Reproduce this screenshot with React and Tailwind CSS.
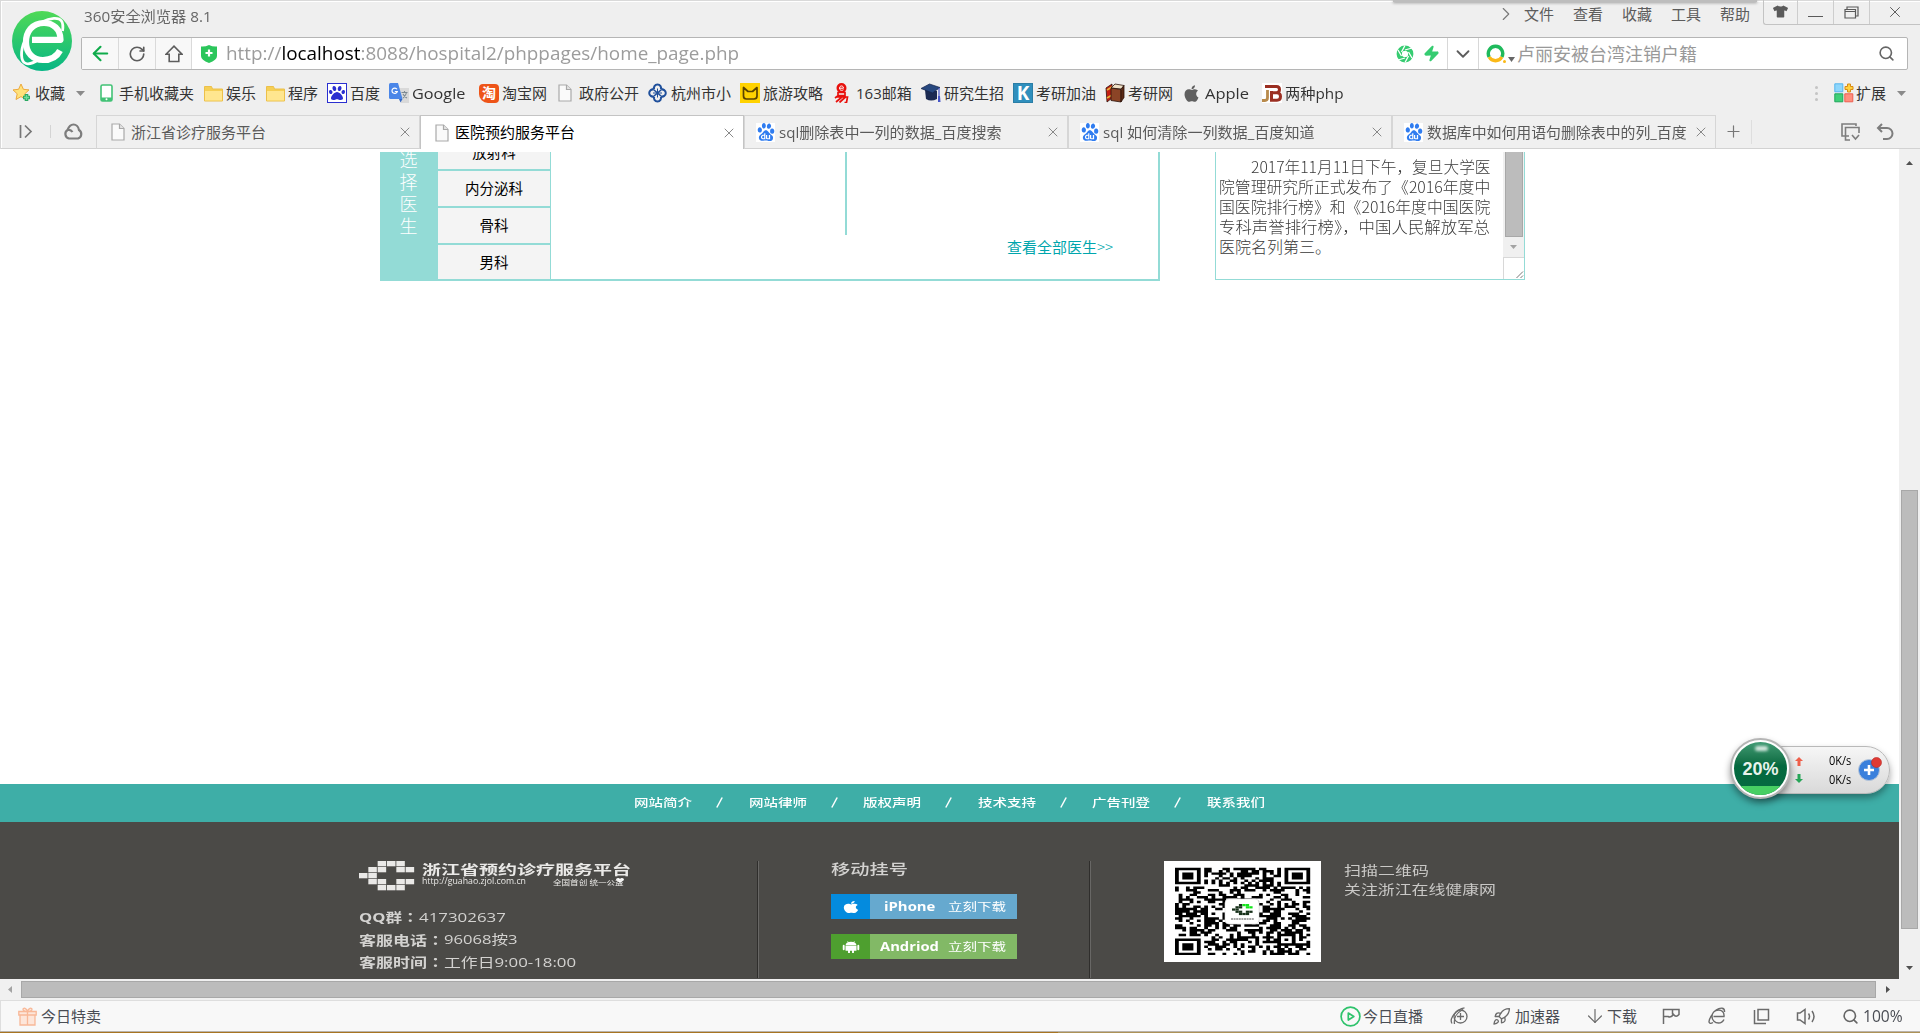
import React, { useLayoutEffect, useRef, useState } from "react";
import { FaApple, FaTshirt, FaPaw } from "react-icons/fa";
import { SiBaidu } from "react-icons/si";
import { Search, Zap, ArrowLeft, RotateCw, ChevronDown, ChevronRight, X, Plus, Rocket, ArrowDown } from "lucide-react";

/* Text run scaled horizontally so that it fills the width of its box. */
function Fit({ className = "", children }) {
  const box = useRef(null);
  const run = useRef(null);
  const [k, setK] = useState(1);
  useLayoutEffect(() => {
    const w = run.current.offsetWidth;
    if (w) setK(box.current.clientWidth / w);
  }, []);
  return (
    <div ref={box} className={"shrink-0 whitespace-nowrap leading-none " + className}>
      <span ref={run} className="inline-block origin-left" style={{ transform: `scaleX(${k})` }}>
        {children}
      </span>
    </div>
  );
}

const PageIcon = ({ className = "" }) => (
  <svg width="14" height="18" viewBox="0 0 14 18" className={"shrink-0 " + className} fill="#fafafa" stroke="#a9a9a9" strokeWidth="1.2">
    <path d="M1 1h7.5L13 5.5V17H1z" />
    <path d="M8.5 1v4.5H13" fill="#e4e4e4" />
  </svg>
);

const FolderIcon = () => (
  <svg width="19" height="17" viewBox="0 0 19 17">
    <path d="M.5 1.5h7l1 2.5H18.500v12H.5z" fill="#f5cf55" stroke="#ecc04a" />
    <path d="M1 6h17v9.500H1z" fill="#ffe68f" />
  </svg>
);

const StarIcon = () => (
  <svg width="20" height="20" viewBox="0 0 20 20">
    <path d="M9 1l2.400 5.300 5.600.6-4.200 3.900 1.200 5.700L9 13.600l-5 2.900 1.200-5.700L1 6.900l5.600-.6z" fill="#ffe27a" stroke="#eda93c" />
    <path d="M14.500 11v7M11 14.500h7" stroke="#2aa862" strokeWidth="3.600" />
    <path d="M14.500 12v5M12 14.500h5" stroke="#6fdc9c" strokeWidth="1.400" />
  </svg>
);

const PhoneIcon = () => (
  <svg width="13" height="18" viewBox="0 0 13 18">
    <rect x="1" y="1" width="11" height="16" rx="1.500" fill="#fff" stroke="#42c276" strokeWidth="1.600" />
    <path d="M1 13.500h11v2.500a1 1 0 0 1-1 1H2a1 1 0 0 1-1-1z" fill="#42c276" />
    <circle cx="6.500" cy="15.300" r="1" fill="#fff" />
  </svg>
);

const BaiduBox = () => (
  <div className="flex h-5 w-5 items-center justify-center border-[1.500px] border-[#2a2fd0] bg-white">
    <FaPaw size={16} color="#2a2fd0" />
  </div>
);

const GoogleIcon = () => (
  <svg width="20" height="20" viewBox="0 0 20 20">
    <path d="M8 5h12v15h-8z" fill="#d9d9d9" />
    <path d="M0 1.500Q0 0 1.500 0H9l4.500 16H1.500Q0 16 0 14.500z" fill="#4a86e8" />
    <path d="M10 16h3.500l-2 3.500z" fill="#3568c4" />
    <path d="M8 6.300A2.700 2.700 0 1 0 8.300 8.500H5.800" fill="none" stroke="#fff" strokeWidth="1.200" />
    <path d="M12.500 9.500h6M15.500 8v1.500M17.500 9.500c-.5 3-2.500 4.500-3.500 5.500M14 11c1 2 2.500 3.500 4 4" stroke="#7d8a93" strokeWidth="1.100" fill="none" />
  </svg>
);

const TaoIcon = () => (
  <div className="flex h-[19px] w-5 items-center justify-center rounded-[4px] rounded-bl-[9px] bg-[#ee5418] text-[14px] leading-none font-bold text-white">淘</div>
);

const HangzhouIcon = () => (
  <svg width="19" height="20" viewBox="0 0 19 20" fill="none" stroke="#1f4f9b" strokeWidth="2">
    <path d="M9.500 10V5.500M9.500 10v4.500M9.500 10H5M9.500 10h4.500" strokeWidth="1" />
    <path d="M6.200 6.500a3.600 3.600 0 1 1 6.600 0M6.200 13.500a3.600 3.600 0 1 0 6.600 0M6 6.600a3.600 3.600 0 1 0 0 6.800M13 6.600a3.600 3.600 0 1 1 0 6.800" />
    <path d="M6 7q3.500 3 7 6M13 7q-3.500 3-7 6" strokeWidth="1.600" />
  </svg>
);

const CatIcon = () => (
  <svg width="20" height="20" viewBox="0 0 20 20">
    <path d="M0 0h20v20H0z" fill="#ffd200" />
    <path d="M3.500 4.500V13q0 3 3 3h7.500q3 0 3-3V4.500l-4.500 4h-4.500z" fill="none" stroke="#5a4300" strokeWidth="1.700" strokeLinejoin="round" />
  </svg>
);

const NetEaseIcon = () => (
  <svg width="15" height="20" viewBox="0 0 15 20" fill="none" stroke="#e8100c">
    <circle cx="7.500" cy="5" r="4" strokeWidth="2" fill="#e8100c" />
    <path d="M5.500 5.200h4c0-3-4-3-4 0 0 2.500 3 2.500 4 1.500" stroke="#fff" strokeWidth="1" />
    <path d="M4 9.500h7v3H4zM1 15l4-3M3 14h10.500l-1 5.500h-2M8 14l-6 5M11.500 14l-6 5.500" strokeWidth="1.700" />
  </svg>
);

const CapIcon = () => (
  <svg width="20" height="20" viewBox="0 0 20 20">
    <path d="M4 7l12 1v8q-6 3-11 0z" fill="#1b2a52" />
    <path d="M0 5.500L8.500 1 19 4.500 11.500 10z" fill="#27487f" stroke="#14234a" strokeWidth=".7" />
    <path d="M18 5v9" stroke="#4656c8" strokeWidth="1.200" />
    <path d="M17 13h2l.5 6h-2.500z" fill="#4656c8" />
  </svg>
);

const KIcon = () => (
  <div className="flex h-5 w-5 items-center justify-center border border-[#2b7ea6] bg-[#2f8fbd] text-[19px] leading-none font-bold text-white">K</div>
);

const BookIcon = () => (
  <svg width="20" height="20" viewBox="0 0 20 20" stroke="#2c130b" strokeWidth=".8">
    <path d="M1 5l6-4v14l-5 4z" fill="#c31d12" />
    <path d="M2 7l5-3M2 15l5-3" stroke="#e9b43c" strokeWidth="1.500" />
    <path d="M6 5l4-4 9 1.500-3 3.500z" fill="#efe2c8" />
    <path d="M6 5l10 1.500V19L6 17.500z" fill="#8b4426" />
    <path d="M16 6.500l3-4v12l-3 4.500z" fill="#5a2914" />
  </svg>
);

const JBIcon = () => (
  <svg width="20" height="20" viewBox="0 0 20 20" fill="none">
    <path d="M0 0h20v20H0z" fill="#fff" />
    <path d="M5.500 7v7.500q0 3-2.500 3H0" stroke="#b88a4c" strokeWidth="2.800" />
    <path d="M3 3.500h11.500q3 0 3 3t-3 3.200H10M9.500 8v9.300h5.500q3.500 0 3.500-3.700T15 9.800" stroke="#9b2f22" strokeWidth="3" />
  </svg>
);

const ExtIcon = () => (
  <svg width="20" height="20" viewBox="0 0 20 20">
    <path d="M.8.8h8v8h-8z" fill="#8ed6fb" stroke="#55b5ee" />
    <path d="M.8 10.800h8v8h-8z" fill="#3fcf78" stroke="#1ea65a" />
    <path d="M10.800 10.800h8v8h-8z" fill="#ff8f7d" stroke="#ee5f50" />
    <path d="M13.500 1h3v2.500H19v3h-2.500V9h-3V6.500H11v-3h2.500z" fill="#ffd23f" stroke="#d98a13" />
  </svg>
);

const GiftIcon = () => (
  <svg width="19" height="19" viewBox="0 0 19 19" fill="#fde6da" stroke="#f8b898" strokeWidth="1.300">
    <path d="M2 8h15v10H2zM.8 4.500h17.400V8H.8zM9.500 4.500V18" />
    <path d="M9.500 4.500C7 4.500 4.500 3.500 5 2s3.500-1 4.500 2.500C10.500 1 13.500.5 14 2s-2 2.500-4.500 2.500z" />
  </svg>
);

const AndroidIcon = () => (
  <svg width="18" height="12" viewBox="0 0 18 12" fill="#fff">
    <path d="M3.500 4.200Q4 .8 9 .8t5.500 3.400zM3.500 4.800h11v4.400q0 .6-.8.6H4.300q-.8 0-.8-.6z" />
    <path d="M1.700 4.800v3.400M16.300 4.800v3.400M7 9.500v2M11 9.500v2" stroke="#fff" strokeWidth="1.900" strokeLinecap="round" />
    <path d="M5.500.2l1 1.300M12.500.2l-1 1.300" stroke="#fff" strokeWidth=".7" />
  </svg>
);

const Caret = ({ className = "" }) => (
  <svg width="9" height="5" viewBox="0 0 9 5" className={"shrink-0 " + className}>
    <path d="M0 0h9L4.500 5z" fill="#8a8a8a" />
  </svg>
);

const Logo = () => (
  <svg width="60" height="60" viewBox="0 0 60 60" className="shrink-0">
    <defs>
      <linearGradient id="lg" x1="0" y1="0" x2="0" y2="1">
        <stop offset="0" stopColor="#4fd956" />
        <stop offset="1" stopColor="#06b685" />
      </linearGradient>
    </defs>
    <circle cx="30" cy="30" r="30" fill="url(#lg)" />
    <g fill="none" stroke="#fff">
      <path d="M20 28.800H48.500C48.500 18 41 12 32 12C20 12 14 21 14 31C14 42 21 49 31 49C38.500 49 45 45.500 48 39.500" strokeWidth="6.200" strokeLinejoin="round" />
      <path d="M13 29C8 40 8.500 51 14 52.500C17 53.500 23 51 27 48.500" strokeWidth="2.800" />
      <path d="M30 11C38 6.500 47 6 49.500 10C51.500 13 51 17 50.500 20" strokeWidth="2.800" />
    </g>
  </svg>
);

/* icon, label, item pitch, icon slot, label width, has caret */
const bookmarks = [
  [StarIcon, "收藏", "w-[88px]", "w-[20px] mr-[3px]", "w-[30px]", true],
  [PhoneIcon, "手机收藏夹", "w-[104px]", "w-[13px] mr-[6px]", "w-[75px]"],
  [FolderIcon, "娱乐", "w-[62px]", "w-[19px] mr-[3px]", "w-[30px]"],
  [FolderIcon, "程序", "w-[61px]", "w-[19px] mr-[3px]", "w-[30px]"],
  [BaiduBox, "百度", "w-[62px]", "w-[20px] mr-[3px]", "w-[30px]"],
  [GoogleIcon, "Google", "w-[90px]", "w-[20px] mr-[3px]", "w-[53px]"],
  [TaoIcon, "淘宝网", "w-[79px]", "w-[20px] mr-[3px]", "w-[45px]"],
  [PageIcon, "政府公开", "w-[90px]", "w-[14px] mr-[7px]", "w-[60px]"],
  [HangzhouIcon, "杭州市小", "w-[92px]", "w-[19px] mr-[4px]", "w-[60px]"],
  [CatIcon, "旅游攻略", "w-[94px]", "w-[20px] mr-[3px]", "w-[60px]"],
  [NetEaseIcon, "163邮箱", "w-[87px]", "w-[15px] mr-[7px]", "w-[56px]"],
  [CapIcon, "研究生招", "w-[92px]", "w-[20px] mr-[3px]", "w-[60px]"],
  [KIcon, "考研加油", "w-[92px]", "w-[20px] mr-[3px]", "w-[60px]"],
  [BookIcon, "考研网", "w-[79px]", "w-[20px] mr-[3px]", "w-[45px]"],
  [() => <FaApple size={19} color="#5f5f5f" />, "Apple", "w-[78px]", "w-[15px] mr-[6px]", "w-[44px]"],
  [JBIcon, "两种php", "w-[90px]", "w-[20px] mr-[3px]", "w-[59px]"],
];

const BaiduIcon = () => (
  <div className="flex h-[19px] w-[19px] shrink-0 items-center justify-center bg-white">
    <SiBaidu size={18} color="#2f7cf0" />
  </div>
);

function Tab({ icon, label, active, width }) {
  return (
    <div
      className={
        "flex h-[34px] w-[324px] shrink-0 items-center border-x border-t pr-[6px] " +
        (active
          ? "border-[#c4c4c4] bg-white pl-[14px] text-black"
          : "border-b border-[#d6d6d6] border-b-[#d2d2d2] bg-[#f0f0f0] text-[#5a5a5a] " + (icon ? "pl-[11px]" : "pl-[14px]"))
      }
    >
      {icon ? <BaiduIcon /> : <PageIcon className="mr-[2px]" />}
      <Fit className={"ml-[4px] text-[15px] " + width}>{label}</Fit>
      <X size={16} strokeWidth={1.400} className="ml-auto shrink-0 text-[#808080]" />
    </div>
  );
}

const departments = ["内分泌科", "骨科", "男科"];

const navItems = ["网站简介", "网站律师", "版权声明", "技术支持", "广告刊登", "联系我们"];

const N = 37;
function finder(x, y, ox, oy) {
  const a = x - ox;
  const b = y - oy;
  if (a < -1 || a > 7 || b < -1 || b > 7) return null;
  if (a < 0 || a > 6 || b < 0 || b > 6) return false;
  const d = Math.max(Math.abs(a - 3), Math.abs(b - 3));
  return d === 3 || d <= 1;
}
function qrPath() {
  let seed = 20171;
  let d = "";
  for (let y = 0; y < N; y++) {
    for (let x = 0; x < N; x++) {
      seed = (seed * 1103515245 + 12345) % 2147483648;
      let on = seed / 2147483648 < 0.52;
      const f = finder(x, y, 0, 0) ?? finder(x, y, N - 7, 0) ?? finder(x, y, 0, N - 7);
      if (f !== null && f !== undefined) on = f;
      else if (x === 6 || y === 6) on = (x + y) % 2 === 0;
      else {
        const m = Math.max(Math.abs(x - 30), Math.abs(y - 30));
        if (m <= 2) on = m !== 1;
      }
      if (on) d += `M${x} ${y}h1.040v1.040h-1.040z`;
    }
  }
  return d;
}
const qr = qrPath();

const logoCells = [[2, 0], [3, 0], [4, 0], [1, 1], [2, 1], [4, 1], [5, 1], [0, 2], [1, 2], [1, 3], [2, 3], [4, 3], [5, 3], [2, 4], [3, 4], [4, 4]];

const TitleBar = () => (
  <div className="flex h-[37px] items-start">
    <Fit className="mt-[9px] ml-[3px] w-[128px] text-[15px] text-[#666]">360安全浏览器 8.1</Fit>
    <div className="ml-auto flex h-[28px] items-center">
      <ChevronRight size={22} strokeWidth={1.200} className="mr-[7px] text-[#777]" />
      <div className="flex gap-[19px] pr-[13px] text-[15px] text-[#5c5c5c]">
        {["文件", "查看", "收藏", "工具", "帮助"].map((t) => (
          <Fit key={t} className="w-[30px]">{t}</Fit>
        ))}
      </div>
    </div>
    <div className="flex h-[25px] w-[157px] rounded-bl-[3px] border-b border-l border-[#c3c3c3] text-[#5a5a5a]">
      <div className="flex w-[34px] items-center justify-center border-r border-[#cdcdcd] pb-px"><FaTshirt size={15} /></div>
      <div className="flex w-[36px] items-center justify-center border-r border-[#cdcdcd] pt-[8px]"><div className="h-px w-[15px] bg-[#5a5a5a]" /></div>
      <div className="flex w-[36px] items-center justify-center border-r border-[#cdcdcd]">
        <svg width="15" height="13" viewBox="0 0 15 13" fill="none" stroke="#5a5a5a" strokeWidth="1.200">
          <path d="M3 3V1h11v9h-2" />
          <path d="M1 3.500h10.500v8.500H1zM1 5.500h10.500" />
        </svg>
      </div>
      <div className="flex flex-1 items-center justify-center pr-[1px]"><X size={18} strokeWidth={1.300} /></div>
    </div>
  </div>
);

const AddressBar = () => (
  <div className="flex h-[33px] w-[1827px] items-stretch rounded-[2px] border border-[#b5b5b5] bg-white">
    <div className="flex w-[37px] items-center justify-center border-r border-[#dadada] bg-[#f8f8f8] text-[#0fab4b]"><ArrowLeft size={23} strokeWidth={2.200} /></div>
    <div className="flex w-[37px] items-center justify-center border-r border-[#dadada] bg-[#f8f8f8] text-[#5d5d5d]"><RotateCw size={18} strokeWidth={2.200} /></div>
    <div className="flex w-[36px] items-center justify-center border-r border-[#dadada] bg-[#f8f8f8] text-[#5d5d5d]">
      <svg width="18" height="18" viewBox="0 0 18 18" fill="none" stroke="#5d5d5d" strokeWidth="1.600"><path d="M1 9.200L9 1.200l8 8h-3.200V16.500H4.200V9.200z" /></svg>
    </div>
    <div className="flex flex-1 items-center pl-[9px]">
      <svg width="16" height="18" viewBox="0 0 16 18">
        <path d="M0 1.500Q4 2 8 0q4 2 8 1.500V11q0 4-8 7-8-3-8-7z" fill="#2cc65c" />
        <path d="M8 4.500v7M4.500 8h7" stroke="#fff" strokeWidth="2.200" />
      </svg>
      <Fit className="ml-[9px] w-[513px] text-[19px] text-[#9c9c9c]">
        http://<span className="text-black">localhost</span>:8088/hospital2/phppages/home_page.php
      </Fit>
      <svg width="18" height="18" viewBox="0 0 18 18" className="ml-auto" fill="none" stroke="#36cc71">
        <circle cx="9" cy="9" r="5.700" strokeWidth="5.400" />
        <g stroke="#fff" strokeWidth="1.300"><path d="M9 5L16 3M12.500 7l3.500 6M12.500 11L9 17.500M9 13L2 15M5.500 11L2 5M5.500 7L9 .5" /></g>
        <circle cx="9" cy="9" r="3" fill="#fff" stroke="none" />
      </svg>
      <Zap size={17} className="mr-[7px] ml-[9px] text-[#36cc71]" fill="#36cc71" />
    </div>
    <div className="flex w-[32px] items-center justify-center border-x border-[#d8d8d8] text-[#5d5d5d]"><ChevronDown size={22} strokeWidth={2} /></div>
    <div className="flex w-[428px] items-center pl-[7px]">
      <svg width="21" height="20" viewBox="0 0 21 20" fill="none" strokeWidth="3.400">
        <path d="M3.200 13A7.200 7.200 0 1 1 15.800 13" stroke="#1fba5c" />
        <path d="M3.200 13a7.200 7.200 0 0 0 12.600 0" stroke="#fbb917" />
        <circle cx="18.500" cy="17.500" r="1.500" fill="#fbb917" stroke="none" />
      </svg>
      <svg width="7" height="5" viewBox="0 0 7 5" className="mt-[12px] ml-[1px]"><path d="M0 0h7L3.500 5z" fill="#666" /></svg>
      <Fit className="ml-[2px] w-[180px] text-[18px] text-[#999]">卢丽安被台湾注销户籍</Fit>
      <Search size={17} strokeWidth={2.300} className="mr-[12px] ml-auto text-[#666]" />
    </div>
  </div>
);

const Bookmarks = () => (
  <div className="flex h-[45px] items-center pt-px pl-[11px] text-[15px] text-[#333]">
    {bookmarks.map(([Icon, label, w, iw, tw, caret]) => (
      <div key={label} className={"flex shrink-0 items-center " + w}>
        <div className={"flex shrink-0 items-center justify-center " + iw}><Icon /></div>
        <Fit className={tw}>{label}</Fit>
        {caret && <Caret className="ml-[11px]" />}
      </div>
    ))}
    <div className="mr-[16px] ml-auto flex flex-col gap-[3px]">
      <div className="h-[3px] w-[3px] rounded-full bg-[#c4c4c4]" />
      <div className="h-[3px] w-[3px] rounded-full bg-[#c4c4c4]" />
      <div className="h-[3px] w-[3px] rounded-full bg-[#c4c4c4]" />
    </div>
    <ExtIcon />
    <Fit className="ml-[2px] w-[30px]">扩展</Fit>
    <Caret className="mr-[14px] ml-[11px]" />
  </div>
);

const TabStrip = () => (
  <div className="flex h-[34px] items-center border-b border-[#d2d2d2]">
    <svg width="14" height="15" viewBox="0 0 14 15" className="ml-[18px]" fill="none" stroke="#777" strokeWidth="1.700"><path d="M1.500 1v13M6 1.500l6 6-6 6" /></svg>
    <div className="ml-[17px] h-[13px] w-px bg-[#d4d4d4]" />
    <svg width="21" height="17" viewBox="0 0 21 17" className="ml-[12px]" fill="none" stroke="#7d7d7d" strokeWidth="2.200"><path d="M6 15.500a4.700 4.700 0 0 1-1.500-8.500C6 3 8 1.500 10.500 1.500S15.500 3.500 16 7a4.700 4.700 0 0 1-1 8.500zM5 7c2-.5 3.500.5 4.500 2" /></svg>
    <div className="ml-[12px] flex self-start">
      <Tab label="浙江省诊疗服务平台" width="w-[135px]" />
      <Tab label="医院预约服务平台" active width="w-[120px]" />
      <Tab label="sql删除表中一列的数据_百度搜索" icon width="w-[223px]" />
      <Tab label="sql 如何清除一列数据_百度知道" icon width="w-[212px]" />
      <Tab label="数据库中如何用语句删除表中的列_百度" icon width="w-[260px]" />
    </div>
    <Plus size={19} strokeWidth={1.500} className="ml-[8px] text-[#777]" />
    <div className="ml-[8px] h-[24px] w-px bg-[#dedede]" />
    <svg width="19" height="18" viewBox="0 0 19 18" className="ml-auto" fill="none" stroke="#7d7d7d" strokeWidth="1.600"><path d="M8 13H1V1h14v2M9 17H4.500V4.500H18V10M11 12l3.500 4 3.500-4" /></svg>
    <svg width="18" height="18" viewBox="0 0 18 18" className="mr-[26px] ml-[16px]" fill="none" stroke="#7d7d7d" strokeWidth="2"><path d="M2 5h9a5.500 5.500 0 0 1 0 11H7M6 1L2 5l4 4" /></svg>
  </div>
);

const DoctorPanel = () => (
  <div className="flex h-[129px] w-[780px] shrink-0 border-r-2 border-b-2 border-[#93dbd6]">
    <div className="flex w-[58px] shrink-0 flex-col items-center overflow-hidden bg-[#93dbd6] pr-[1px] text-[18px] leading-[22px] font-light text-white">
      <div className="-mt-[4px]">选</div><div>择</div><div>医</div><div>生</div>
    </div>
    <div className="flex w-[113px] shrink-0 flex-col border-r border-[#93dbd6] bg-[#f4f4f4] text-[14.500px] text-black">
      <div className="flex h-[17px] shrink-0 items-end justify-center overflow-hidden pb-[9px] leading-[17px]">放射科</div>
      {departments.map((d) => (
        <div key={d} className="flex h-[37px] shrink-0 justify-center border-t-2 border-[#93dbd6] leading-[33px]">{d}</div>
      ))}
    </div>
    <div className="h-[83px] w-[296px] shrink-0 border-r-2 border-[#93dbd6]" />
    <Fit className="mt-[87px] ml-[160px] w-[106px] text-[15px] text-[#00a6ad]">查看全部医生<span className="font-light">&gt;&gt;</span></Fit>
  </div>
);

const NewsBox = () => (
  <div className="ml-[55px] flex h-[128px] w-[310px] shrink-0 border-x border-b border-[#93dbd6] bg-white">
    <div className="flex flex-1 flex-col gap-[4px] pt-[6px] pl-[3px] text-[16px] font-light text-[#3a3a3a]">
      <Fit className="ml-[32px] w-[239px]">2017年11月11日下午，复旦大学医</Fit>
      <Fit className="w-[271px]">院管理研究所正式发布了《2016年度中</Fit>
      <Fit className="w-[271px]">国医院排行榜》和《2016年度中国医院</Fit>
      <Fit className="w-[271px]">专科声誉排行榜》，中国人民解放军总</Fit>
      <Fit className="w-[112px]">医院名列第三。</Fit>
    </div>
    <div className="flex w-[21px] flex-col bg-[#f0f0f0]">
      <div className="mx-auto h-[85px] w-[18px] border border-t-0 border-[#a8a8a8] bg-[#bcbcbc]" />
      <div className="flex h-[20px] items-center justify-center"><svg width="7" height="4" viewBox="0 0 7 4"><path d="M0 0h7L3.500 4z" fill="#a3a3a3" /></svg></div>
      <div className="flex flex-1 items-end justify-end border-t border-l border-[#d8d8d8] bg-white">
        <svg width="9" height="9" viewBox="0 0 9 9" stroke="#777" fill="none"><path d="M1.500 8L8 1.500M5.500 8L8 5.500" /></svg>
      </div>
    </div>
  </div>
);

const InfoRow = ({ label, value, lw, vw }) => (
  <div className="flex h-[22.500px] items-center text-[13px] text-[#d3d2d0]">
    <Fit className={"font-bold " + lw}>{label}<span className="font-['Noto_Sans_CJK_TC',sans-serif]">：</span></Fit>
    <Fit className={vw}>{value}</Fit>
  </div>
);

const FooterRule = () => <div className="mt-[39px] h-[117px] w-[2px] shrink-0 border-l border-[#2f2e2c] bg-[#686765]" />;

const Footer = () => (
  <div>
    <div className="flex h-[38px] items-center bg-[#3eaea7] pb-[2px] pl-[634px] text-[11px] font-medium text-white">
      {navItems.map((t, i) => (
        <div key={t} className="flex items-center">
          <Fit className="w-[58px]">{t}</Fit>
          {i < 5 && <div className="mr-[25.500px] ml-[24px] w-[7px]"><svg width="7" height="11" viewBox="0 0 7 11"><path d="M.8 10.500L6.200.5" stroke="#fff" strokeWidth="1.500" /></svg></div>}
        </div>
      ))}
    </div>
    <div className="flex h-[157px] bg-[#4b4a47]">
      <div className="mt-[39px] ml-[359px] w-[398px] shrink-0">
        <div className="flex h-[34px]">
          <svg width="56" height="30" viewBox="0 0 56 30" fill="#eae9e7">
            {logoCells.map(([x, y]) => <rect key={x + "-" + y} x={x * 9.330} y={y * 6} width="8.500" height="5.300" />)}
          </svg>
          <div className="pt-[2px] pl-[7px] text-[#eae9e7]">
            <Fit className="h-[13px] w-[209px] text-[13px] font-bold">浙江省预约诊疗服务平台</Fit>
            <div className="flex items-start">
              <Fit className="mt-[1px] w-[104px] text-[8.500px]">http://guahao.zjol.com.cn</Fit>
              <Fit className="mt-[4px] ml-[27px] w-[71px] text-[6.500px]">全国首创 统一公益</Fit>
              <svg width="8" height="5" viewBox="0 0 8 5" className="mt-[2px] -ml-[8px]"><path d="M4 5L0 2Q0 0 2 0q1.500 0 2 1Q4.500 0 6 0q2 0 2 2z" fill="#fff" /></svg>
            </div>
          </div>
        </div>
        <div className="mt-[11px]">
          <InfoRow label="QQ群" value="417302637" lw="w-[60px]" vw="w-[87px]" />
          <InfoRow label="客服电话" value="96068按3" lw="w-[85px]" vw="w-[74px]" />
          <InfoRow label="客服时间" value="工作日9:00-18:00" lw="w-[85px]" vw="w-[132px]" />
        </div>
      </div>
      <FooterRule />
      <div className="mt-[39px] ml-[72px] w-[259px] shrink-0">
        <Fit className="mt-[1px] h-[31px] w-[77px] text-[14px] font-medium text-[#d3d2d0]">移动挂号</Fit>
        <div className="mt-px flex h-[25px] w-[186px] items-center bg-[#66a9cf] text-white">
          <div className="flex h-full w-[39px] items-center justify-center bg-[#048bde]"><FaApple size={14} className="scale-x-140" /></div>
          <Fit className="ml-[14px] w-[52px] text-[12px] font-bold">iPhone</Fit>
          <Fit className="ml-[12px] w-[58px] text-[11px]">立刻下载</Fit>
        </div>
        <div className="mt-[15px] flex h-[25px] w-[186px] items-center bg-[#82b966] text-white">
          <div className="flex h-full w-[39px] items-center justify-center bg-[#4e9f2f]"><AndroidIcon /></div>
          <Fit className="ml-[10px] w-[59px] text-[12px] font-bold">Andriod</Fit>
          <Fit className="ml-[9px] w-[58px] text-[11px]">立刻下载</Fit>
        </div>
      </div>
      <div className="-ml-px"><FooterRule /></div>
      <div className="mt-[39px] ml-[73px] h-[101px] w-[157px] shrink-0 bg-white">
        <svg width="157" height="101" viewBox="0 0 157 101">
          <g transform="translate(11 6.700) scale(3.650 2.360)"><path d={qr} fill="#000" /></g>
          <rect x="61" y="38" width="34" height="25" rx="4" fill="#fff" stroke="#ddd" strokeWidth=".6" />
          <g transform="translate(68 43) scale(.37)">
            {logoCells.map(([x, y]) => <rect key={x + "-" + y} x={x * 9.330} y={y * 6} width="9" height="6" fill={x > 2 && y < 2 ? "#14e51c" : "#17301a"} />)}
          </g>
          <path d="M67 58h23" stroke="#888" strokeWidth="1.300" strokeDasharray="2 .6" />
        </svg>
      </div>
      <div className="mt-[42px] ml-[23px] text-[13px] text-[#c9c8c6]">
        <Fit className="h-[19px] w-[85px]">扫描二维码</Fit>
        <Fit className="w-[152px]">关注浙江在线健康网</Fit>
      </div>
    </div>
  </div>
);

const SpeedWidget = () => (
  <div className="absolute top-[738px] left-[1730px] flex h-[61px] w-[160px] items-center">
    <div className="absolute top-[8px] right-0 flex h-[48px] w-[136px] items-center rounded-r-full border border-[#b9b9b9] bg-gradient-to-b from-[#f6f6f6] to-[#d9d9d9] pl-[40px] shadow-[0_4px_7px_rgba(0,0,0,0.35)]">
      <div className="flex flex-col gap-[8px]">
        <svg width="8" height="9" viewBox="0 0 8 9"><path d="M4 0l4 4H5.500v5h-3V4H0z" fill="#ee5f4a" /></svg>
        <svg width="8" height="9" viewBox="0 0 8 9"><path d="M4 9L0 5h2.500V0h3v5H8z" fill="#27a558" /></svg>
      </div>
      <div className="ml-[26px] flex flex-col gap-[7px] text-[12px] text-black">
        <Fit className="w-[22px]">0K/s</Fit>
        <Fit className="w-[22px]">0K/s</Fit>
      </div>
      <svg width="27" height="26" viewBox="0 0 27 26" className="-mt-[3px] ml-[6px] shrink-0">
        <circle cx="12" cy="14" r="10.500" fill="#3a80dc" stroke="#b5c4d8" strokeWidth="1" />
        <path d="M12 9v10M7 14h10" stroke="#fff" strokeWidth="2.600" />
        <circle cx="19.500" cy="6.500" r="5" fill="#e03a34" stroke="#b82520" strokeWidth=".6" />
      </svg>
    </div>
    <div className="relative flex h-[61px] w-[61px] items-center justify-center rounded-full border-2 border-[#b5b5b5] bg-white p-[2px] shadow-[0_4px_7px_rgba(0,0,0,0.4)]">
      <div className="relative flex h-full w-full items-center justify-center overflow-hidden rounded-full bg-gradient-to-b from-[#3f9a73] via-[#04693f] via-45% to-[#066b41]">
        <div className="absolute inset-x-0 bottom-0 h-[9px] bg-[#47cf63]" />
        <div className="absolute top-[4px] left-[21px] h-[5px] w-[13px] rounded-full bg-white/80 blur-[1.500px]" />
        <Fit className="relative w-[36px] font-['Liberation_Sans',sans-serif] text-[18px] font-bold text-[#e8f3ec]">20%</Fit>
      </div>
    </div>
  </div>
);

const StatusBar = () => (
  <div className="flex h-[31px] items-center border-t border-l border-[#dedede] bg-[#f8f8f8] text-[15px] text-[#4a4d54]">
    <div className="ml-[17px]"><GiftIcon /></div>
    <Fit className="ml-[4px] w-[60px]">今日特卖</Fit>
    <svg width="21" height="21" viewBox="0 0 21 21" className="ml-auto" fill="none" stroke="#2fc36c" strokeWidth="1.700"><circle cx="10.500" cy="10.500" r="9.400" /><path d="M8.300 7l5.500 3.500-5.500 3.500z" strokeLinejoin="round" /></svg>
    <Fit className="ml-[2px] w-[60px]">今日直播</Fit>
    <svg width="18" height="18" viewBox="0 0 18 18" className="ml-[27px]" fill="none" stroke="#6b6b6b" strokeWidth="1.300"><circle cx="10.500" cy="9.500" r="6.500" /><path d="M10.500 6v7M7 9.500h7M2 16.500C-1 12 6 2 14.500.8M4.500 17C3.500 11 7 5.500 13 2.500" /></svg>
    <Rocket size={19} strokeWidth={1.700} className="ml-[24px] text-[#6b6b6b]" />
    <Fit className="ml-[4px] w-[45px]">加速器</Fit>
    <ArrowDown size={22} strokeWidth={1.300} className="ml-[24px] text-[#6b6b6b]" />
    <Fit className="ml-[1px] w-[30px]">下载</Fit>
    <svg width="18" height="16" viewBox="0 0 18 16" className="ml-[25px]" fill="none" stroke="#6b6b6b" strokeWidth="1.500"><path d="M1.500 16V1.500H17v5q-3 3.500-5.500 0-2.500 3.500-5.500 2H1.500M10.500 1.500v5" /></svg>
    <svg width="18" height="18" viewBox="0 0 18 18" className="ml-[28px]" fill="none" stroke="#6b6b6b" strokeWidth="1.400"><path d="M5.500 9.500H16C16.500 5 13.500 3 10.500 3 6 3 4 6.500 4 9.500c0 4 3 6.500 6.500 6.500 2.500 0 4.500-1.500 5.500-3.500M4 8C-1 15 1 18 5 15.500M8 3c4-2.500 9-3 8.500 2" /></svg>
    <svg width="17" height="17" viewBox="0 0 17 17" className="ml-[27px]" fill="none" stroke="#6b6b6b" strokeWidth="1.500"><path d="M5 1.500h10.500V12H5zM1.500 2v13.500H13" /></svg>
    <svg width="21" height="17" viewBox="0 0 21 17" className="ml-[26px]" fill="none" stroke="#6b6b6b" strokeWidth="1.500"><path d="M1.500 5v7H4l5 3.500v-14L4 5zM12.500 5.500q2 3 0 6M16 3q4 5.500 0 11" /></svg>
    <Search size={17} strokeWidth={2.300} className="ml-[25px] text-[#666]" />
    <Fit className="mr-[17px] ml-[4px] w-[40px] text-[16px]">100%</Fit>
  </div>
);

export default function App() {
  return (
    <div className="relative flex h-[1033px] w-[1920px] flex-col overflow-hidden bg-white font-['Open_Sans','Noto_Sans_CJK_SC',sans-serif]">
      <div className="h-[149px] border-t border-l border-[#d9d9d9] bg-[#efefef] shadow-[inset_1px_1px_0_#fff]">
        <div className="flex h-[69px]">
          <div className="mt-[10px] mr-[9px] ml-[11px] h-[59px] w-[60px]"><Logo /></div>
          <div className="-mt-px flex-1"><TitleBar /><AddressBar /></div>
        </div>
        <Bookmarks />
        <TabStrip />
      </div>
      <div className="absolute top-0 left-[1393px] h-[2px] w-[364px] bg-[#bdbdbd] shadow-[0_1px_3px_rgba(0,0,0,0.4)]" />

      <div className="flex h-[830px]">
        <div className="flex w-[1899px] flex-col">
          <div className="flex h-[635px] pt-[3px] pl-[380px] font-['Noto_Sans_CJK_SC',sans-serif]">
            <DoctorPanel />
            <NewsBox />
          </div>
          <Footer />
        </div>
        <div className="flex flex-1 flex-col items-center bg-[#f0f0f0]">
          <svg width="7" height="4" viewBox="0 0 7 4" className="mt-[12px]"><path d="M0 4h7L3.500 0z" fill="#505050" /></svg>
          <div className="mt-[325px] h-[439px] w-[17px] border border-[#a8a8a8] bg-[#bcbcbc]" />
          <svg width="7" height="4" viewBox="0 0 7 4" className="mt-[37px]"><path d="M0 0h7L3.500 4z" fill="#505050" /></svg>
        </div>
      </div>

      <div className="flex h-[21px] items-center bg-[#f0f0f0]">
        <svg width="4" height="7" viewBox="0 0 4 7" className="ml-[8px]"><path d="M4 0v7L0 3.500z" fill="#a3a3a3" /></svg>
        <div className="ml-[9px] h-[17px] w-[1855px] border border-[#a8a8a8] bg-[#bcbcbc]" />
        <svg width="4" height="7" viewBox="0 0 4 7" className="ml-[10px]"><path d="M0 0v7l4-3.500z" fill="#505050" /></svg>
      </div>

      <StatusBar />
      <div className="h-px bg-[#b9b3ab]" />
      <div className="flex h-px"><div className="w-[1058px] bg-[#a87420]" /><div className="flex-1 bg-[#ad9256]" /></div>
      <SpeedWidget />
    </div>
  );
}
